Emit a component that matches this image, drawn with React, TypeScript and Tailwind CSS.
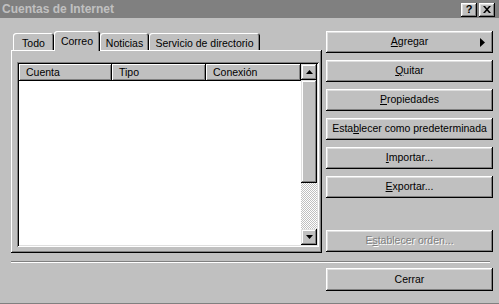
import React from "react";

const font = { fontFamily: '"Liberation Sans", Arial, sans-serif' };

function Btn({
  children,
  disabled,
  arrow,
}: {
  children: React.ReactNode;
  disabled?: boolean;
  arrow?: boolean;
}) {
  return (
    <div className="relative h-[22px] w-full bg-[#c0c0c0] shadow-[inset_-1px_-1px_#000,inset_1px_1px_#fff,inset_-2px_-2px_#808080,inset_2px_2px_#dfdfdf] flex items-center justify-center">
      <span
        className={
          disabled
            ? "text-[10.5px] text-[#808080] [text-shadow:1px_1px_0_#fff]"
            : "text-[10.5px] text-black"
        }
      >
        {children}
      </span>
      {arrow && (
        <svg className="absolute right-[8px] top-[7px]" width="5" height="9" viewBox="0 0 5 9">
          <path d="M0 0 L5 4.5 L0 9 Z" fill="#000" />
        </svg>
      )}
    </div>
  );
}

function Tab({ label, selected, w }: { label: string; selected?: boolean; w: string }) {
  return (
    <div
      className={
        selected
          ? `${w} h-[20px] -mb-px relative z-10 bg-[#c0c0c0] rounded-t-[3px] shadow-[inset_1px_1px_#fff,inset_-1px_0_#000,inset_-2px_0_#808080] flex items-start pt-[3px] justify-center text-[10.5px]`
          : `${w} h-[17px] bg-[#c0c0c0] rounded-t-[3px] shadow-[inset_1px_1px_#fff,inset_-1px_0_#000,inset_-2px_0_#808080] flex items-start pt-[3px] justify-center text-[10.5px]`
      }
    >
      {label}
    </div>
  );
}

function HeaderCell({ label, w }: { label: string; w: string }) {
  return (
    <div
      className={`${w} h-[17px] bg-[#c0c0c0] shadow-[inset_-1px_-1px_#000,inset_1px_1px_#fff,inset_-2px_-2px_#808080] flex items-center pl-[7px] text-[10.5px]`}
    >
      {label}
    </div>
  );
}

function ScrollBtn({ up }: { up?: boolean }) {
  return (
    <div className="h-[16px] w-[16px] bg-[#c0c0c0] shadow-[inset_-1px_-1px_#000,inset_1px_1px_#dfdfdf,inset_-2px_-2px_#808080,inset_2px_2px_#fff] flex items-center justify-center">
      <svg width="7" height="4" viewBox="0 0 7 4">
        {up ? <path d="M3.5 0 L7 4 L0 4 Z" fill="#000" /> : <path d="M0 0 L7 0 L3.5 4 Z" fill="#000" />}
      </svg>
    </div>
  );
}

export default function App() {
  return (
    <div
      className="w-[499px] h-[304px] bg-[#c0c0c0] flex flex-col text-black border-b border-[#808080] overflow-hidden"
      style={font}
    >
      {/* Title bar */}
      <div className="h-[18px] bg-[#808080] flex items-center justify-between pl-[2px] pr-[4px]">
        <span className="text-[12px] font-bold text-[#c0c0c0] leading-none">Cuentas de Internet</span>
        <div className="flex gap-[2px] mt-[1px]">
          <div className="w-[16px] h-[14px] bg-[#c0c0c0] shadow-[inset_-1px_-1px_#000,inset_1px_1px_#fff,inset_-2px_-2px_#808080,inset_2px_2px_#dfdfdf] flex items-center justify-center text-[11px] font-bold leading-none">
            ?
          </div>
          <div className="w-[16px] h-[14px] bg-[#c0c0c0] shadow-[inset_-1px_-1px_#000,inset_1px_1px_#fff,inset_-2px_-2px_#808080,inset_2px_2px_#dfdfdf] flex items-center justify-center">
            <svg width="8" height="7" viewBox="0 0 8 7">
              <path d="M0 0 L2 0 L4 2.3 L6 0 L8 0 L5 3.5 L8 7 L6 7 L4 4.7 L2 7 L0 7 L3 3.5 Z" fill="#000" />
            </svg>
          </div>
        </div>
      </div>

      {/* Body */}
      <div className="flex pl-[11px] pt-[13px] gap-[4px]">
        {/* Tab control */}
        <div className="w-[311px] flex flex-col">
          <div className="h-[19px] flex items-end pl-[2px]">
            <Tab label="Todo" w="w-[41px]" />
            <Tab label="Correo" w="w-[46px]" selected />
            <Tab label="Noticias" w="w-[49px]" />
            <Tab label="Servicio de directorio" w="w-[111px]" />
          </div>
          <div className="h-[203px] bg-[#c0c0c0] shadow-[inset_-1px_-1px_#000,inset_1px_1px_#fff,inset_-2px_-2px_#808080] pt-[12px] pl-[6px] pr-[3px]">
            {/* List box */}
            <div className="h-[185px] w-[302px] bg-white p-[2px] shadow-[inset_1px_1px_#808080,inset_-1px_-1px_#fff,inset_2px_2px_#000,inset_-2px_-2px_#dfdfdf] flex">
              <div className="flex-1 flex flex-col">
                <div className="flex">
                  <HeaderCell label="Cuenta" w="w-[93px]" />
                  <HeaderCell label="Tipo" w="w-[94px]" />
                  <HeaderCell label="Conexión" w="w-[95px]" />
                </div>
                <div className="flex-1 bg-white" />
              </div>
              <div className="w-[16px] flex flex-col">
                <ScrollBtn up />
                <div className="h-[103px] bg-[#c0c0c0] shadow-[inset_-1px_-1px_#000,inset_1px_1px_#dfdfdf,inset_-2px_-2px_#808080,inset_2px_2px_#fff]" />
                <div className="flex-1 bg-[image:repeating-conic-gradient(#fff_0%_25%,#c0c0c0_0%_50%)] bg-[length:2px_2px]" />
                <ScrollBtn />
              </div>
            </div>
          </div>
        </div>

        {/* Right buttons */}
        <div className="w-[167px] h-[221px] flex flex-col gap-[7px]">
          <Btn arrow>
            <span className="underline">A</span>gregar
          </Btn>
          <Btn>
            <span className="underline">Q</span>uitar
          </Btn>
          <Btn>
            <span className="underline">P</span>ropiedades
          </Btn>
          <Btn>
            Esta<span className="underline">b</span>lecer como predeterminada
          </Btn>
          <Btn>
            <span className="underline">I</span>mportar...
          </Btn>
          <Btn>
            <span className="underline">E</span>xportar...
          </Btn>
          <div className="mt-auto">
            <Btn disabled>
              E<span className="underline">s</span>tablecer orden...
            </Btn>
          </div>
        </div>
      </div>

      {/* Separator */}
      <div className="ml-[11px] mt-[8px] w-[479px] h-[2px] border-t border-[#808080] border-b border-b-white" />

      {/* Close */}
      <div className="flex justify-end pr-[6px] mt-[5px]">
        <div className="w-[167px]">
          <div className="h-[23px] bg-[#c0c0c0] shadow-[inset_-1px_-1px_#000,inset_1px_1px_#fff,inset_-2px_-2px_#808080,inset_2px_2px_#dfdfdf] flex items-center justify-center text-[10.5px]">
            Cerrar
          </div>
        </div>
      </div>
    </div>
  );
}
